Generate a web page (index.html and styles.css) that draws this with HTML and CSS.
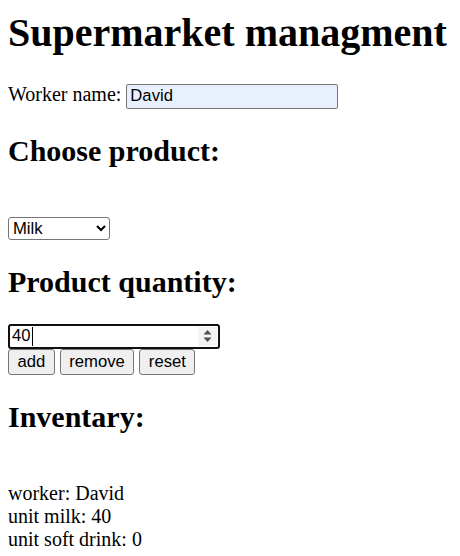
FILE: index.html
```html
<!DOCTYPE html>
<html lang="en">
<head>
  <meta charset="UTF-8">
  <meta name="viewport" content="width=device-width, initial-scale=1.0">
  <title>Supermarket managment</title>
  <link rel="stylesheet" href="styles.css">
</head>
<body>
  <h1>Supermarket managment</h1>
  <div class="line">
    <label for="worker">Worker name:</label>
    <input id="worker" class="field autofill" type="text" value="David">
  </div>
  <h2>Choose product:</h2>
  <div class="line empty"></div>
  <div class="line">
    <select class="product">
      <option>Milk</option>
      <option>Soft drink</option>
    </select>
  </div>
  <h2>Product quantity:</h2>
  <div class="line">
    <span class="num-field">
      <input class="num-input" type="text" value="40"><span class="caret"></span>
      <span class="spinner">
        <svg width="9" height="14" viewBox="0 0 9 14">
          <path d="M4.5 1 L8.5 5.5 L0.5 5.5 Z" fill="#505050"/>
          <path d="M4.5 13 L8.5 8.5 L0.5 8.5 Z" fill="#505050"/>
        </svg>
      </span>
    </span>
  </div>
  <div class="line">
    <button class="btn">add</button>
    <button class="btn">remove</button>
    <button class="btn">reset</button>
  </div>
  <h2>Inventary:</h2>
  <div class="line empty"></div>
  <div class="inventory">
    <div>worker: David</div>
    <div>unit milk: 40</div>
    <div>unit soft drink: 0</div>
  </div>
</body>
</html>
```

FILE: styles.css
```css
body {
  margin: 9px 8px 10px;
  font-family: "Liberation Serif", "Times New Roman", serif;
  font-size: 20px;
  color: #000;
  background: #fff;
}
h1 {
  font-size: 40px;
  margin: 0 0 27px;
}
h2 {
  font-size: 30px;
  margin: 25px 0;
}
.line {
  min-height: 23px;
}
.field {
  box-sizing: border-box;
  width: 212px;
  height: 25px;
  padding: 1px 3px;
  border: 1px solid #767676;
  border-radius: 2px;
  font-family: "Liberation Sans", Arial, sans-serif;
  font-size: 16.67px;
  color: #000;
}
.autofill {
  background: #e8f0fe;
}
.product {
  box-sizing: border-box;
  width: 102px;
  height: 23px;
  border: 1px solid #767676;
  border-radius: 3px;
  background: #fff;
  font-family: "Liberation Sans", Arial, sans-serif;
  font-size: 16.67px;
  color: #000;
}
.num-field {
  box-sizing: border-box;
  display: inline-flex;
  align-items: center;
  width: 212px;
  height: 25px;
  border: 2px solid #101010;
  border-radius: 3px;
  vertical-align: top;
}
.num-input {
  width: 20px;
  margin: 0;
  padding: 0 0 0 2px;
  border: none;
  outline: none;
  background: transparent;
  font-family: "Liberation Sans", Arial, sans-serif;
  font-size: 16.67px;
  color: #000;
}
.caret {
  width: 1px;
  height: 19px;
  background: #000;
}
.spinner {
  margin-left: auto;
  margin-right: 1px;
  width: 19px;
  height: 19px;
  background: #f3f3f3;
  display: flex;
  align-items: center;
  justify-content: center;
}
.btn {
  box-sizing: border-box;
  height: 26px;
  padding: 1px 8.5px;
  border: 1px solid #767676;
  border-radius: 3px;
  background: #efefef;
  font-family: "Liberation Sans", Arial, sans-serif;
  font-size: 16.67px;
  color: #000;
}
.inventory {
  line-height: 23px;
}
```
